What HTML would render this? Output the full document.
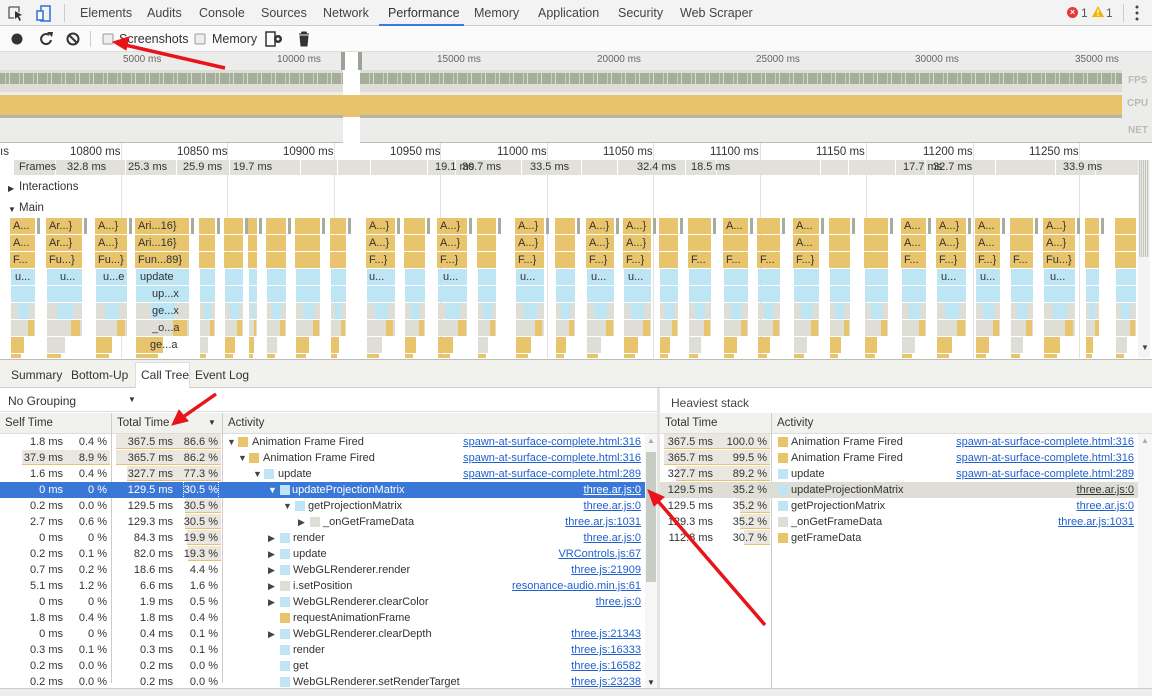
<!DOCTYPE html>
<html><head><meta charset="utf-8"><style>
*{margin:0;padding:0;box-sizing:border-box}
body{width:1152px;height:696px;overflow:hidden;background:#fff;font-family:"Liberation Sans",sans-serif;font-size:12px;color:#333;position:relative}
.ab{position:absolute;white-space:nowrap}
.tab{position:absolute;top:6px;font-size:12.5px;color:#444}
.rl{position:absolute;top:146px;font-size:11.5px;color:#333}
.ft{position:absolute;top:161px;font-size:11px;color:#333}
.fl{position:absolute;height:16px;font-size:11px;line-height:16px;padding-left:3px;color:#333;overflow:hidden;white-space:nowrap}
.row{position:absolute;left:0;width:645px;height:16px;line-height:16px;font-size:11px}
.c{position:absolute;top:0;text-align:right;color:#333}
.sel .c,.sel .nm,.sel .lk{color:#fff}
.nm{position:absolute;top:0;color:#333}
.lk{position:absolute;right:4px;top:0;color:#1f5fd0;text-decoration:underline}
.ic{position:absolute;top:3px;width:10px;height:10px}
.tr{position:absolute;top:0;font-size:9px;color:#444}
.bar{position:absolute;top:1px;height:15px;background:#e9e7df;border-bottom:1px solid #e7c270}
.o{background:#e8c46c}.b{background:#bde5f4}.g{background:#dfded6}
.hd{position:absolute;top:413px;height:21px;background:#f1f1ee;border-bottom:1px solid #ddd;font-size:11.5px;line-height:20px;padding-left:5px;color:#333}
.rrow{position:absolute;left:660px;width:478px;height:16px;line-height:16px;font-size:11px}
</style></head><body>

<div class="ab" style="left:0;top:0;width:1152px;height:26px;background:#f3f3f3;border-bottom:1px solid #ccc"></div>
<svg class="ab" style="left:8px;top:5px" width="48" height="18" viewBox="0 0 48 18">
<path d="M1 2h10v5M1 2v11h5" fill="none" stroke="#555" stroke-width="1.3"/>
<path d="M7 6l7 4-3 1 2 4-1.5 1-2-4-2.5 2z" fill="#333"/>
<rect x="33" y="1" width="9" height="15" fill="none" stroke="#2e6fd6" stroke-width="1.5"/>
<rect x="29" y="6" width="6" height="9" fill="#fff" stroke="#2e6fd6" stroke-width="1.5"/>
</svg>
<div class="ab" style="left:64px;top:4px;width:1px;height:18px;background:#ccc"></div>
<span class="tab" style="left:80px">Elements</span>
<span class="tab" style="left:147px">Audits</span>
<span class="tab" style="left:199px">Console</span>
<span class="tab" style="left:261px">Sources</span>
<span class="tab" style="left:323px">Network</span>
<span class="tab" style="left:388px;color:#333">Performance</span>
<div class="ab" style="left:379px;top:24px;width:85px;height:2px;background:#3b78e7"></div>
<span class="tab" style="left:474px">Memory</span>
<span class="tab" style="left:538px">Application</span>
<span class="tab" style="left:618px">Security</span>
<span class="tab" style="left:680px">Web Scraper</span>
<div class="ab" style="left:1067px;top:7px;width:11px;height:11px;border-radius:50%;background:#e53935;color:#fff;font-size:9px;line-height:11px;text-align:center;font-weight:bold">×</div>
<span class="ab" style="left:1081px;top:6px;font-size:12px;color:#555">1</span>
<svg class="ab" style="left:1092px;top:6px" width="12" height="12"><path d="M6 0L12 11H0z" fill="#f4b400"/><rect x="5.3" y="3.5" width="1.4" height="4" fill="#fff"/><rect x="5.3" y="8.5" width="1.4" height="1.4" fill="#fff"/></svg>
<span class="ab" style="left:1106px;top:6px;font-size:12px;color:#555">1</span>
<div class="ab" style="left:1123px;top:4px;width:1px;height:18px;background:#ccc"></div>
<svg class="ab" style="left:1134px;top:5px" width="6" height="16"><circle cx="3" cy="2" r="1.5" fill="#444"/><circle cx="3" cy="8" r="1.5" fill="#444"/><circle cx="3" cy="14" r="1.5" fill="#444"/></svg>

<div class="ab" style="left:0;top:26px;width:1152px;height:26px;background:#fbfbfb;border-bottom:1px solid #ddd"></div>
<svg class="ab" style="left:8px;top:30px" width="310" height="18">
<circle cx="9" cy="9" r="5.5" fill="#333"/>
<path d="M41 5a5 5 0 1 0 2 5" fill="none" stroke="#333" stroke-width="2"/><path d="M39 2l6 0-1 5z" fill="#333"/>
<circle cx="65" cy="9" r="5.5" fill="none" stroke="#333" stroke-width="2"/><path d="M61 5l8 8" stroke="#333" stroke-width="2"/>
<rect x="82" y="1" width="1" height="16" fill="#ccc"/>
<rect x="95" y="4" width="10" height="10" rx="1" fill="#eee" stroke="#999"/>
<rect x="187" y="4" width="10" height="10" rx="1" fill="#eee" stroke="#999"/>
<rect x="258" y="2" width="9" height="14" fill="none" stroke="#333" stroke-width="1.5"/>
<circle cx="270" cy="9" r="4" fill="#333"/><circle cx="270" cy="9" r="1.5" fill="#fbfbfb"/>
<path d="M291 4h10M293 4l1-2h4l1 2M292 6h8l-1 10h-6z" fill="#333" stroke="#333" stroke-width="1"/>
</svg>
<span class="ab" style="left:119px;top:32px;font-size:12.5px">Screenshots</span>
<span class="ab" style="left:212px;top:32px;font-size:12.5px">Memory</span>

<div class="ab" style="left:0;top:52px;width:1152px;height:91px;background:#ececea;border-bottom:1px solid #bbb"></div>
<span class="ab" style="left:123px;top:54px;font-size:10px;color:#666">5000 ms</span>
<span class="ab" style="left:277px;top:54px;font-size:10px;color:#666">10000 ms</span>
<span class="ab" style="left:437px;top:54px;font-size:10px;color:#666">15000 ms</span>
<span class="ab" style="left:597px;top:54px;font-size:10px;color:#666">20000 ms</span>
<span class="ab" style="left:756px;top:54px;font-size:10px;color:#666">25000 ms</span>
<span class="ab" style="left:915px;top:54px;font-size:10px;color:#666">30000 ms</span>
<span class="ab" style="left:1075px;top:54px;font-size:10px;color:#666">35000 ms</span>
<div class="ab" style="left:0;top:70px;width:1122px;height:22px;background:#deded6"></div>
<div class="ab" style="left:0;top:73px;width:1122px;height:11px;background:repeating-linear-gradient(90deg,#a4ae9b 0 5px,#c8cdc0 5px 6px,#a4ae9b 6px 9px,#dcdcd4 9px 10px,#a4ae9b 10px 14px)"></div>
<div class="ab" style="left:0;top:95px;width:1122px;height:20px;background:#e8c36c"></div>
<div class="ab" style="left:0;top:115px;width:1122px;height:3px;background:#b2b6a8"></div>
<span class="ab" style="left:1128px;top:75px;font-size:10px;font-weight:bold;color:#b8bcb4">FPS</span>
<span class="ab" style="left:1127px;top:98px;font-size:10px;font-weight:bold;color:#b8bcb4">CPU</span>
<span class="ab" style="left:1128px;top:125px;font-size:10px;font-weight:bold;color:#b8bcb4">NET</span>
<div class="ab" style="left:343px;top:52px;width:17px;height:91px;background:#fff"></div>
<div class="ab" style="left:343px;top:95px;width:17px;height:22px;background:#e6c26a"></div>
<div class="ab" style="left:341px;top:52px;width:4px;height:18px;background:#9aa39a"></div>
<div class="ab" style="left:358px;top:52px;width:4px;height:18px;background:#9aa39a"></div>

<div id="grid"></div>
<span class="rl" style="left:70px">10800 ms</span>
<span class="rl" style="left:177px">10850 ms</span>
<span class="rl" style="left:283px">10900 ms</span>
<span class="rl" style="left:390px">10950 ms</span>
<span class="rl" style="left:497px">11000 ms</span>
<span class="rl" style="left:603px">11050 ms</span>
<span class="rl" style="left:710px">11100 ms</span>
<span class="rl" style="left:816px">11150 ms</span>
<span class="rl" style="left:923px">11200 ms</span>
<span class="rl" style="left:1029px">11250 ms</span>
<span class="rl" style="left:0px">ıs</span>
<div class="ab" style="left:13px;top:160px;width:1125px;height:15px;background:#e1e1d9"></div>
<div id="fsep"></div>
<span class="ft" style="left:19px">Frames</span>
<span class="ft" style="left:67px">32.8 ms</span><span class="ft" style="left:128px">25.3 ms</span><span class="ft" style="left:183px">25.9 ms</span><span class="ft" style="left:233px">19.7 ms</span>
<span class="ft" style="left:435px">19.1 ms</span><span class="ft" style="left:462px">30.7 ms</span><span class="ft" style="left:530px">33.5 ms</span><span class="ft" style="left:637px">32.4 ms</span>
<span class="ft" style="left:691px">18.5 ms</span><span class="ft" style="left:903px">17.7 ms</span><span class="ft" style="left:933px">32.7 ms</span><span class="ft" style="left:1063px">33.9 ms</span>
<span class="ab" style="left:8px;top:184px;font-size:8px">▶</span><span class="ab" style="left:19px;top:181px;font-size:11.5px">Interactions</span>
<span class="ab" style="left:8px;top:205px;font-size:8px">▼</span><span class="ab" style="left:19px;top:202px;font-size:11.5px">Main</span>
<div id="flame"></div>
<div class="ab" style="left:1138px;top:160px;width:12px;height:198px;background:#f4f4f4"></div>
<div class="ab" style="left:1139px;top:160px;width:10px;height:97px;background:repeating-linear-gradient(90deg,#c4c8bf 0 1px,#e8e8e4 1px 2px)"></div>
<span class="ab" style="left:1141px;top:343px;font-size:8px;color:#444">▼</span>

<div class="fl" style="left:10px;top:218px">A...</div><div class="fl" style="left:46px;top:218px">Ar...}</div><div class="fl" style="left:95px;top:218px">A...}</div><div class="fl" style="left:135px;top:218px">Ari...16}</div>
<div class="fl" style="left:366px;top:218px">A...}</div><div class="fl" style="left:437px;top:218px">A...}</div><div class="fl" style="left:515px;top:218px">A...}</div>
<div class="fl" style="left:586px;top:218px">A...}</div><div class="fl" style="left:623px;top:218px">A...}</div><div class="fl" style="left:723px;top:218px">A...</div><div class="fl" style="left:793px;top:218px">A...</div><div class="fl" style="left:901px;top:218px">A...</div><div class="fl" style="left:936px;top:218px">A...}</div><div class="fl" style="left:975px;top:218px">A...</div><div class="fl" style="left:1043px;top:218px">A...}</div>
<div class="fl" style="left:10px;top:235px">A...</div><div class="fl" style="left:46px;top:235px">Ar...}</div><div class="fl" style="left:95px;top:235px">A...}</div><div class="fl" style="left:135px;top:235px">Ari...16}</div>
<div class="fl" style="left:366px;top:235px">A...}</div><div class="fl" style="left:437px;top:235px">A...}</div><div class="fl" style="left:515px;top:235px">A...}</div>
<div class="fl" style="left:586px;top:235px">A...}</div><div class="fl" style="left:623px;top:235px">A...}</div><div class="fl" style="left:793px;top:235px">A...</div><div class="fl" style="left:901px;top:235px">A...</div><div class="fl" style="left:936px;top:235px">A...}</div><div class="fl" style="left:975px;top:235px">A...</div><div class="fl" style="left:1043px;top:235px">A...}</div>
<div class="fl" style="left:10px;top:252px">F...</div><div class="fl" style="left:46px;top:252px">Fu...}</div><div class="fl" style="left:95px;top:252px">Fu...}</div><div class="fl" style="left:135px;top:252px">Fun...89}</div>
<div class="fl" style="left:366px;top:252px">F...}</div><div class="fl" style="left:437px;top:252px">F...}</div><div class="fl" style="left:515px;top:252px">F...}</div>
<div class="fl" style="left:586px;top:252px">F...}</div><div class="fl" style="left:623px;top:252px">F...}</div><div class="fl" style="left:688px;top:252px">F...</div><div class="fl" style="left:723px;top:252px">F...</div><div class="fl" style="left:757px;top:252px">F...</div><div class="fl" style="left:793px;top:252px">F...}</div><div class="fl" style="left:901px;top:252px">F...</div><div class="fl" style="left:936px;top:252px">F...}</div><div class="fl" style="left:975px;top:252px">F...}</div><div class="fl" style="left:1010px;top:252px">F...</div><div class="fl" style="left:1043px;top:252px">Fu...}</div>
<div class="fl" style="left:12px;top:269px">u...</div><div class="fl" style="left:57px;top:269px">u...</div><div class="fl" style="left:100px;top:269px">u...e</div><div class="fl" style="left:137px;top:269px">update</div>
<div class="fl" style="left:366px;top:269px">u...</div><div class="fl" style="left:440px;top:269px">u...</div><div class="fl" style="left:517px;top:269px">u...</div>
<div class="fl" style="left:588px;top:269px">u...</div><div class="fl" style="left:625px;top:269px">u...</div><div class="fl" style="left:938px;top:269px">u...</div><div class="fl" style="left:977px;top:269px">u...</div><div class="fl" style="left:1047px;top:269px">u...</div>
<div class="fl" style="left:149px;top:286px">up...x</div><div class="fl" style="left:149px;top:303px">ge...x</div><div class="fl" style="left:149px;top:320px">_o...a</div><div class="fl" style="left:147px;top:337px">ge...a</div>

<div class="ab" style="left:0;top:359px;width:1152px;height:29px;background:#f1f1ee;border-top:1px solid #bbb;border-bottom:1px solid #ccc"></div>
<div class="ab" style="left:135px;top:362px;width:55px;height:26px;background:#fff;border:1px solid #ddd;border-bottom:none"></div>
<span class="ab" style="left:11px;top:368px;font-size:12px">Summary</span>
<span class="ab" style="left:71px;top:368px;font-size:12px">Bottom-Up</span>
<span class="ab" style="left:141px;top:368px;font-size:12px">Call Tree</span>
<span class="ab" style="left:195px;top:368px;font-size:12px">Event Log</span>
<span class="ab" style="left:8px;top:394px;font-size:12px">No Grouping</span>
<span class="ab" style="left:128px;top:395px;font-size:8px">▼</span>
<div class="ab" style="left:0;top:411px;width:657px;height:1px;background:#ddd"></div>

<div class="hd" style="left:0;width:111px">Self Time</div>
<div class="hd" style="left:111px;width:111px;border-left:1px solid #ccc">Total Time</div>
<span class="ab" style="left:208px;top:418px;font-size:8px">▼</span>
<div class="hd" style="left:222px;width:435px;border-left:1px solid #ccc">Activity</div>
<div class="ab" style="left:111px;top:413px;width:1px;height:270px;background:#ccc"></div>
<div class="ab" style="left:222px;top:413px;width:1px;height:270px;background:#ccc"></div>

<div class="bar" style="left:22px;top:450px;width:88px"></div>
<div class="bar" style="left:116px;top:434px;width:105px"></div>
<div class="bar" style="left:116px;top:450px;width:105px"></div>
<div class="bar" style="left:127px;top:466px;width:94px"></div>
<div class="bar" style="left:185px;top:498px;width:36px"></div>
<div class="bar" style="left:185px;top:514px;width:36px"></div>
<div class="bar" style="left:187px;top:530px;width:34px"></div>
<div class="bar" style="left:188px;top:546px;width:33px"></div>

<div class="row sel" style="top:482px;background:#3a78d8;width:645px"></div>
<div class="row" style="top:434px"><span class="c" style="right:582px">1.8 ms</span><span class="c" style="right:538px">0.4 %</span><span class="c" style="right:472px">367.5 ms</span><span class="c" style="right:427px">86.6 %</span><span class="tr" style="left:227px">▼</span><span class="ic o" style="left:238px"></span><span class="nm" style="left:252px">Animation Frame Fired</span><span class="lk">spawn-at-surface-complete.html:316</span></div>
<div class="row" style="top:450px"><span class="c" style="right:582px">37.9 ms</span><span class="c" style="right:538px">8.9 %</span><span class="c" style="right:472px">365.7 ms</span><span class="c" style="right:427px">86.2 %</span><span class="tr" style="left:238px">▼</span><span class="ic o" style="left:249px"></span><span class="nm" style="left:263px">Animation Frame Fired</span><span class="lk">spawn-at-surface-complete.html:316</span></div>
<div class="row" style="top:466px"><span class="c" style="right:582px">1.6 ms</span><span class="c" style="right:538px">0.4 %</span><span class="c" style="right:472px">327.7 ms</span><span class="c" style="right:427px">77.3 %</span><span class="tr" style="left:253px">▼</span><span class="ic b" style="left:264px"></span><span class="nm" style="left:278px">update</span><span class="lk">spawn-at-surface-complete.html:289</span></div>
<div class="row sel" style="top:482px"><span class="c" style="right:582px">0 ms</span><span class="c" style="right:538px">0 %</span><span class="c" style="right:472px">129.5 ms</span><span class="c" style="right:427px;outline:1px dotted #fff">30.5 %</span><span class="tr" style="left:268px;color:#fff">▼</span><span class="ic b" style="left:280px"></span><span class="nm" style="left:292px">updateProjectionMatrix</span><span class="lk">three.ar.js:0</span></div>
<div class="row" style="top:498px"><span class="c" style="right:582px">0.2 ms</span><span class="c" style="right:538px">0.0 %</span><span class="c" style="right:472px">129.5 ms</span><span class="c" style="right:427px">30.5 %</span><span class="tr" style="left:283px">▼</span><span class="ic b" style="left:295px"></span><span class="nm" style="left:308px">getProjectionMatrix</span><span class="lk">three.ar.js:0</span></div>
<div class="row" style="top:514px"><span class="c" style="right:582px">2.7 ms</span><span class="c" style="right:538px">0.6 %</span><span class="c" style="right:472px">129.3 ms</span><span class="c" style="right:427px">30.5 %</span><span class="tr" style="left:298px">▶</span><span class="ic g" style="left:310px"></span><span class="nm" style="left:323px">_onGetFrameData</span><span class="lk">three.ar.js:1031</span></div>
<div class="row" style="top:530px"><span class="c" style="right:582px">0 ms</span><span class="c" style="right:538px">0 %</span><span class="c" style="right:472px">84.3 ms</span><span class="c" style="right:427px">19.9 %</span><span class="tr" style="left:268px">▶</span><span class="ic b" style="left:280px"></span><span class="nm" style="left:293px">render</span><span class="lk">three.ar.js:0</span></div>
<div class="row" style="top:546px"><span class="c" style="right:582px">0.2 ms</span><span class="c" style="right:538px">0.1 %</span><span class="c" style="right:472px">82.0 ms</span><span class="c" style="right:427px">19.3 %</span><span class="tr" style="left:268px">▶</span><span class="ic b" style="left:280px"></span><span class="nm" style="left:293px">update</span><span class="lk">VRControls.js:67</span></div>
<div class="row" style="top:562px"><span class="c" style="right:582px">0.7 ms</span><span class="c" style="right:538px">0.2 %</span><span class="c" style="right:472px">18.6 ms</span><span class="c" style="right:427px">4.4 %</span><span class="tr" style="left:268px">▶</span><span class="ic b" style="left:280px"></span><span class="nm" style="left:293px">WebGLRenderer.render</span><span class="lk">three.js:21909</span></div>
<div class="row" style="top:578px"><span class="c" style="right:582px">5.1 ms</span><span class="c" style="right:538px">1.2 %</span><span class="c" style="right:472px">6.6 ms</span><span class="c" style="right:427px">1.6 %</span><span class="tr" style="left:268px">▶</span><span class="ic g" style="left:280px"></span><span class="nm" style="left:293px">i.setPosition</span><span class="lk">resonance-audio.min.js:61</span></div>
<div class="row" style="top:594px"><span class="c" style="right:582px">0 ms</span><span class="c" style="right:538px">0 %</span><span class="c" style="right:472px">1.9 ms</span><span class="c" style="right:427px">0.5 %</span><span class="tr" style="left:268px">▶</span><span class="ic b" style="left:280px"></span><span class="nm" style="left:293px">WebGLRenderer.clearColor</span><span class="lk">three.js:0</span></div>
<div class="row" style="top:610px"><span class="c" style="right:582px">1.8 ms</span><span class="c" style="right:538px">0.4 %</span><span class="c" style="right:472px">1.8 ms</span><span class="c" style="right:427px">0.4 %</span><span class="ic o" style="left:280px"></span><span class="nm" style="left:293px">requestAnimationFrame</span></div>
<div class="row" style="top:626px"><span class="c" style="right:582px">0 ms</span><span class="c" style="right:538px">0 %</span><span class="c" style="right:472px">0.4 ms</span><span class="c" style="right:427px">0.1 %</span><span class="tr" style="left:268px">▶</span><span class="ic b" style="left:280px"></span><span class="nm" style="left:293px">WebGLRenderer.clearDepth</span><span class="lk">three.js:21343</span></div>
<div class="row" style="top:642px"><span class="c" style="right:582px">0.3 ms</span><span class="c" style="right:538px">0.1 %</span><span class="c" style="right:472px">0.3 ms</span><span class="c" style="right:427px">0.1 %</span><span class="ic b" style="left:280px"></span><span class="nm" style="left:293px">render</span><span class="lk">three.js:16333</span></div>
<div class="row" style="top:658px"><span class="c" style="right:582px">0.2 ms</span><span class="c" style="right:538px">0.0 %</span><span class="c" style="right:472px">0.2 ms</span><span class="c" style="right:427px">0.0 %</span><span class="ic b" style="left:280px"></span><span class="nm" style="left:293px">get</span><span class="lk">three.js:16582</span></div>
<div class="row" style="top:674px"><span class="c" style="right:582px">0.2 ms</span><span class="c" style="right:538px">0.0 %</span><span class="c" style="right:472px">0.2 ms</span><span class="c" style="right:427px">0.0 %</span><span class="ic b" style="left:280px"></span><span class="nm" style="left:293px">WebGLRenderer.setRenderTarget</span><span class="lk">three.js:23238</span></div>
<div class="ab" style="left:645px;top:434px;width:12px;height:256px;background:#f6f6f6"></div>
<div class="ab" style="left:646px;top:452px;width:10px;height:130px;background:#c9ccc4"></div>
<span class="ab" style="left:647px;top:436px;font-size:8px;color:#aaa">▲</span>
<span class="ab" style="left:647px;top:678px;font-size:8px;color:#333">▼</span>
<div class="ab" style="left:0;top:688px;width:1152px;height:8px;background:#eee;border-top:1px solid #ccc"></div>
<div class="ab" style="left:657px;top:388px;width:3px;height:300px;background:#e4e4e0"></div>

<span class="ab" style="left:671px;top:396px;font-size:12px;color:#444">Heaviest stack</span>
<div class="hd" style="left:660px;width:111px">Total Time</div>
<div class="hd" style="left:771px;width:381px;border-left:1px solid #ccc">Activity</div>
<div class="ab" style="left:771px;top:413px;width:1px;height:275px;background:#ccc"></div>
<div class="bar" style="left:664px;top:434px;width:106px"></div>
<div class="bar" style="left:664px;top:450px;width:106px"></div>
<div class="bar" style="left:676px;top:466px;width:94px"></div>
<div class="bar" style="left:740px;top:498px;width:30px"></div>
<div class="bar" style="left:740px;top:514px;width:30px"></div>
<div class="bar" style="left:744px;top:530px;width:26px"></div>
<div class="ab" style="left:660px;top:482px;width:478px;height:16px;background:#dfded6"></div>
<div class="rrow" style="top:434px"><span class="c" style="right:425px">367.5 ms</span><span class="c" style="right:371px">100.0 %</span><span class="ic o" style="left:118px"></span><span class="nm" style="left:131px">Animation Frame Fired</span><span class="lk">spawn-at-surface-complete.html:316</span></div>
<div class="rrow" style="top:450px"><span class="c" style="right:425px">365.7 ms</span><span class="c" style="right:371px">99.5 %</span><span class="ic o" style="left:118px"></span><span class="nm" style="left:131px">Animation Frame Fired</span><span class="lk">spawn-at-surface-complete.html:316</span></div>
<div class="rrow" style="top:466px"><span class="c" style="right:425px">327.7 ms</span><span class="c" style="right:371px">89.2 %</span><span class="ic b" style="left:118px"></span><span class="nm" style="left:131px">update</span><span class="lk">spawn-at-surface-complete.html:289</span></div>
<div class="rrow" style="top:482px"><span class="c" style="right:425px">129.5 ms</span><span class="c" style="right:371px">35.2 %</span><span class="ic b" style="left:118px"></span><span class="nm" style="left:131px">updateProjectionMatrix</span><span class="lk" style="color:#333">three.ar.js:0</span></div>
<div class="rrow" style="top:498px"><span class="c" style="right:425px">129.5 ms</span><span class="c" style="right:371px">35.2 %</span><span class="ic b" style="left:118px"></span><span class="nm" style="left:131px">getProjectionMatrix</span><span class="lk">three.ar.js:0</span></div>
<div class="rrow" style="top:514px"><span class="c" style="right:425px">129.3 ms</span><span class="c" style="right:371px">35.2 %</span><span class="ic g" style="left:118px"></span><span class="nm" style="left:131px">_onGetFrameData</span><span class="lk">three.ar.js:1031</span></div>
<div class="rrow" style="top:530px"><span class="c" style="right:425px">112.8 ms</span><span class="c" style="right:371px">30.7 %</span><span class="ic o" style="left:118px"></span><span class="nm" style="left:131px">getFrameData</span></div>
<div class="ab" style="left:1138px;top:434px;width:14px;height:254px;background:#f6f6f6"></div>
<span class="ab" style="left:1141px;top:436px;font-size:8px;color:#aaa">▲</span>

<svg class="ab" style="left:0;top:0" width="1152" height="696">
<g stroke="#e8141a" stroke-width="3.5" fill="#e8141a">
<line x1="225" y1="68" x2="125" y2="45"/><path d="M113 42l16-5-3 13z" stroke-width="1"/>
<line x1="216" y1="394" x2="183" y2="417"/><path d="M172 425l7-15 9 11z" stroke-width="1"/>
<line x1="765" y1="625" x2="657" y2="500"/><path d="M648 490l16 7-10 9z" stroke-width="1"/>
</g></svg>

<script>
(function(){
var g=document.getElementById('grid'),h='';
[121,227,334,440,547,653,760,866,973,1079].forEach(function(x){h+='<div class="ab" style="left:'+x+'px;top:143px;width:1px;height:215px;background:#e2e2e2"></div>';});
g.innerHTML=h;
var f=document.getElementById('fsep');h='';
[13,55,125,176,229,300,337,370,427,455,521,581,617,685,716,820,848,895,925,995,1055,1095].forEach(function(x){h+='<div class="ab" style="left:'+x+'px;top:160px;width:1px;height:15px;background:#fff"></div>';});
f.innerHTML=h;
var cols=[[10,25],[46,36],[95,32],[135,54],[199,16],[224,19],[248,9],[266,20],[295,25],[330,16],[366,29],[404,21],[437,30],[477,19],[515,29],[555,20],[586,28],[623,28],[659,19],[688,23],[723,25],[757,23],[793,26],[829,21],[864,24],[901,25],[936,30],[975,25],[1010,23],[1043,32],[1085,14],[1115,21]];
var ys=[218,235,252,269,286,303,320,337],o='#e8c46c',b='#bde5f4',gr='#dfded6';h='';
function box(x,y,w,c){return '<div class="ab" style="left:'+x+'px;top:'+y+'px;width:'+w+'px;height:16px;background:'+c+'"></div>';}
cols.forEach(function(c,i){var x=c[0],w=c[1];
 for(var r=0;r<3;r++)h+=box(x,ys[r],w,o);
 h+='<div class="ab" style="left:'+(x+w+2)+'px;top:218px;width:3px;height:16px;background:#a5ada0"></div>';
 h+=box(x+1,ys[3],w-1,b);
 h+=box(x+1,ys[4],w-1,b);
 h+=box(x+1,ys[5],w-1,gr);h+=box(x+Math.round(w*0.3),ys[5],Math.round(w*0.45),b);
 h+=box(x+1,ys[6],w-1,gr);h+=box(x+Math.round(w*0.7),ys[6],Math.round(w*0.25),o);
 h+=box(x+1,ys[7],Math.round(w*0.5),(i%3==1)?gr:o);
 h+='<div class="ab" style="left:'+(x+1)+'px;top:354px;width:'+Math.round(w*0.4)+'px;height:4px;background:'+o+'"></div>';
});
document.getElementById('flame').innerHTML=h;
})();
</script>
</body></html>
